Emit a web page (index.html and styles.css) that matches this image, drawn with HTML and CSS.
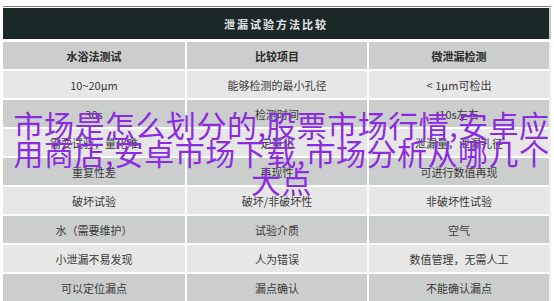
FILE: index.html
```html
<!DOCTYPE html>
<html lang="zh">
<head>
<meta charset="utf-8">
<link rel="stylesheet" href="styles.css">
</head>
<body>
<div class="page">
  <div class="rule"></div>
  <div class="caption">泄漏试验方法比较</div>
  <div class="grid">
    <div class="cell head">水浴法测试</div>
    <div class="cell head">比较项目</div>
    <div class="cell head">微泄漏检测</div>

    <div class="cell light">10~20μm</div>
    <div class="cell light">能够检测的最小孔径</div>
    <div class="cell light">&lt; 1μm可检出</div>

    <div class="cell dark">30s</div>
    <div class="cell dark">检测时间</div>
    <div class="cell dark">10s左右</div>

    <div class="cell light">需要试验，量化难</div>
    <div class="cell light">定量化</div>
    <div class="cell light">泄漏量，泄漏孔径</div>

    <div class="cell dark">重复性差</div>
    <div class="cell dark">再现性</div>
    <div class="cell dark">可进行数值再现</div>

    <div class="cell light">破坏试验</div>
    <div class="cell light">破坏/非破坏性</div>
    <div class="cell light">非破坏性试验</div>

    <div class="cell dark">水（需要维护）</div>
    <div class="cell dark">试验介质</div>
    <div class="cell dark">空气</div>

    <div class="cell light">小泄漏不易发现</div>
    <div class="cell light">人为错误</div>
    <div class="cell light">数值管理，无需人工</div>

    <div class="cell dark">可以定位漏点</div>
    <div class="cell dark">漏点确认</div>
    <div class="cell dark">不能确认漏点</div>
  </div>
  <div class="overlay">市场是怎么划分的,股票市场行情,安卓应用商店,安卓市场下载,市场分析从哪几个大点</div>
</div>
</body>
</html>
```

FILE: styles.css
```css
html, body {
  margin: 0;
  padding: 0;
  background: #ffffff;
}
body {
  width: 554px;
  height: 301px;
  overflow: hidden;
  font-family: "Noto Sans CJK SC", "Noto Sans", sans-serif;
}
.page {
  position: relative;
  padding: 6px 0 0 3px;
  width: 548px;
}
.rule {
  height: 1px;
  background: #7b7f7f;
  margin-bottom: 1px;
}
.caption {
  height: 31px;
  background: #1b2828;
  color: #e4e6e6;
  font-size: 11px;
  font-weight: bold;
  letter-spacing: 2px;
  display: flex;
  align-items: center;
  justify-content: center;
  margin-bottom: 3px;
  border-right: 2px solid #c9cccc;
}
.grid {
  display: grid;
  grid-template-columns: 182px 180px 180px;
  grid-auto-rows: 27px;
  gap: 2px;
  border-right: 2px solid #f0f0f0;
  width: 546px;
}
.cell {
  display: flex;
  align-items: center;
  justify-content: center;
  font-size: 11px;
  color: #3a3a3a;
}
.head {
  background: #cccecd;
  font-weight: bold;
  color: #2a2a2a;
}
.light {
  background: #e6e7e6;
}
.dark {
  background: #cccecd;
}
.overlay {
  position: absolute;
  left: 13px;
  top: 110px;
  width: 537px;
  text-align: center;
  font-size: 30px;
  line-height: 28px;
  letter-spacing: 0.5px;
  color: #8b2be2;
  font-family: "Noto Sans CJK SC", sans-serif;
}
```
